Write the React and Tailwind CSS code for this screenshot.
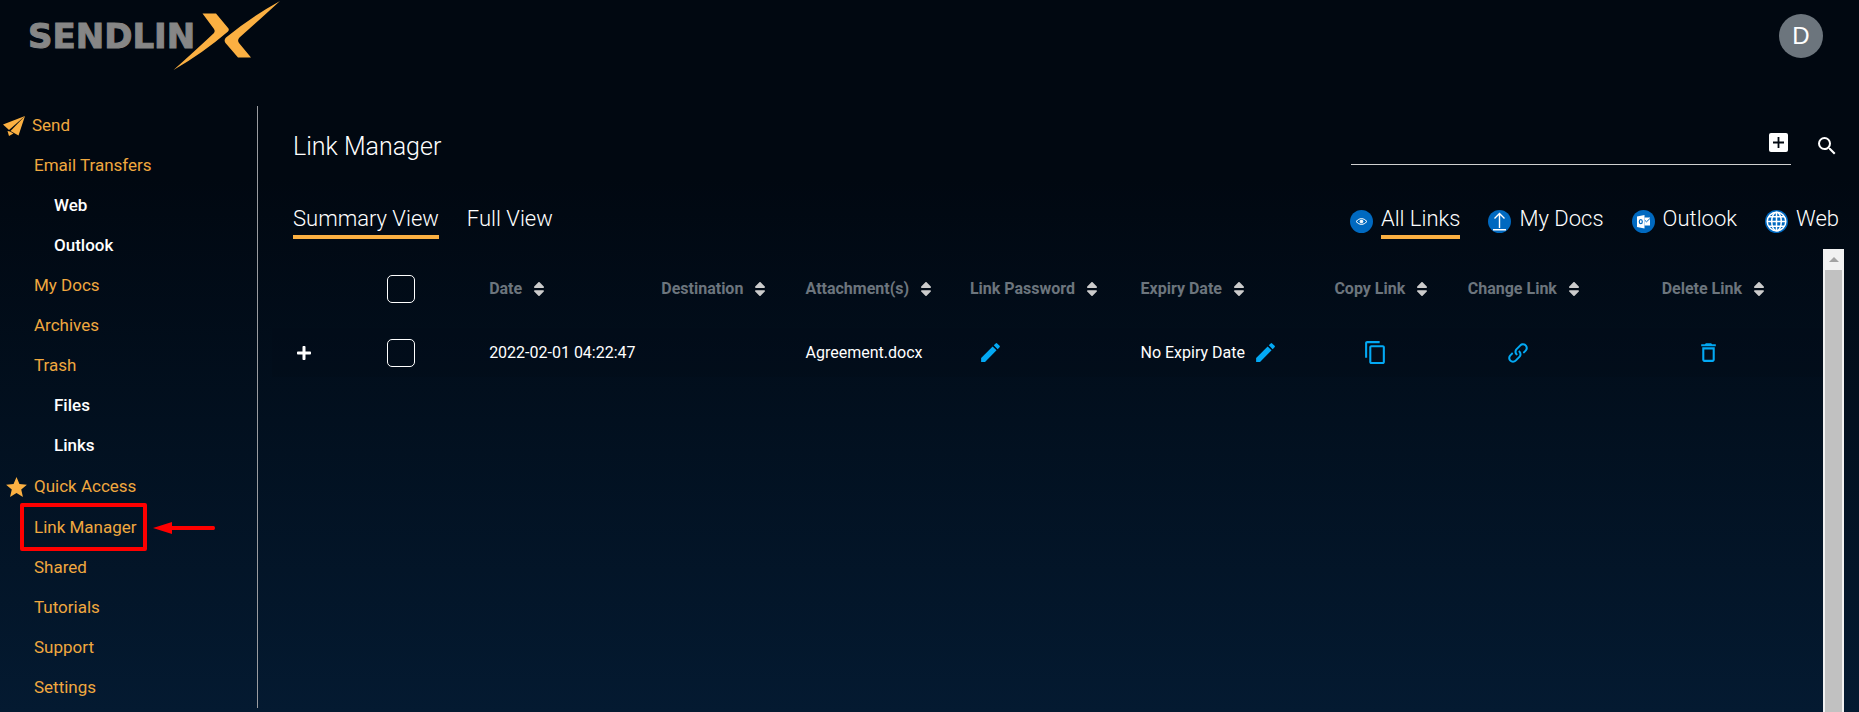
import clsx from 'clsx';
import { useState } from 'react';
import { FaPlus, FaSort } from 'react-icons/fa';
import { ImLink } from 'react-icons/im';
import { MdContentCopy, MdDeleteOutline, MdEdit, MdSearch, MdStar } from 'react-icons/md';

const sendItems = [
  { label: 'Email Transfers' },
  { label: 'Web', nested: true },
  { label: 'Outlook', nested: true },
  { label: 'My Docs' },
  { label: 'Archives' },
  { label: 'Trash' },
  { label: 'Files', nested: true },
  { label: 'Links', nested: true },
];

const quickItems = [
  { label: 'Link Manager', marked: true },
  { label: 'Shared' },
  { label: 'Tutorials' },
  { label: 'Support' },
  { label: 'Settings' },
];

const columns = [
  { label: 'Date', width: 'w-[11.1%]' },
  { label: 'Destination', width: 'w-[9.3%]' },
  { label: 'Attachment(s)', width: 'w-[10.6%]' },
  { label: 'Link Password', width: 'w-[11%]' },
  { label: 'Expiry Date', width: 'w-[12.5%]' },
  { label: 'Copy Link', width: 'w-[8.6%]' },
  { label: 'Change Link', width: 'w-[12.5%]' },
  { label: 'Delete Link', width: '' },
];

const links = [{ id: 1, date: '2022-02-01 04:22:47', destination: '', attachment: 'Agreement.docx', expiry: 'No Expiry Date' }];

const Logo = () => (
  <a href="#home" aria-label="Sendlinx" className="relative ml-7 block h-[72px] w-64">
    <span className="absolute top-[14px] left-0 font-['DejaVu_Sans'] text-[34px] leading-[44px] font-bold text-[#868686] [-webkit-text-stroke:1px_#868686]">SENDLIN</span>
    <svg viewBox="0 0 110 72" className="absolute top-0 left-[144px] h-[72px] w-[110px]" fill="#fbb042" aria-hidden="true">
      <path d="M30.5 13.5H44L56.5 28.500Q57.500 30 56 31.500Q31 53 1.500 70Q25 49 42 33Q43.500 31 42 29Z" />
      <path d="M108 1Q84 23 67.500 37.500Q65 40 67 43L79 57.500H66L53.500 43Q51.500 40 54 37.500Q79 17 108 1Z" />
    </svg>
  </a>
);

const SendIcon = () => (
  <svg viewBox="0 0 22 20" className="h-5 w-[22px]" fill="#fbb042" aria-hidden="true">
    <path d="M0 8.500 22 0 6 14Z" />
    <path d="M22 0 15.500 19.500 7.500 15Z" />
    <path d="M4.500 15 7 15.500 10.500 17.500 6 20Z" />
  </svg>
);

const NavItem = ({ label, nested, marked }) => (
  <li className={clsx('relative flex h-10 items-center', nested ? 'pl-[54px] text-white' : 'pl-[34px] text-[#f0a83f]')}>
    <a href="#nav" className={clsx(nested && 'font-medium')}>{label}</a>
    {marked && (
      <>
        <span className="absolute -top-[5px] left-5 h-12 w-[127px] rounded-xs border-4 border-[#ff0000]" />
        <svg viewBox="0 0 62 12" className="absolute top-[14px] left-[153px] h-3 w-[62px]" fill="#ff0000" aria-hidden="true">
          <path d="M0 6 19 0V4H60.500Q62 4 62 6T60.500 8H19V12Z" />
        </svg>
      </>
    )}
  </li>
);

const Sidebar = () => (
  <nav className="mb-1 w-[258px] shrink-0 border-r border-[#9a9ca0] text-[17px]">
    <a href="#send" className="flex h-10 items-center gap-[7px] pl-[3px] text-[#f0a83f]">
      <SendIcon /> Send
    </a>
    <ul>
      {sendItems.map((item) => <NavItem key={item.label} {...item} />)}
    </ul>
    <a href="#quick" className="mt-px flex h-10 items-center gap-[5px] pl-1 text-[#f0a83f]">
      <MdStar className="text-[#fbb042]" size={25} /> Quick Access
    </a>
    <ul className="mt-px">
      {quickItems.map((item) => <NavItem key={item.label} {...item} />)}
    </ul>
  </nav>
);

const EyeGlyph = () => (
  <g fill="none" stroke="#fff" strokeWidth="1">
    <path d="M6 11.500Q11.500 5.500 17 11.500Q11.500 17.500 6 11.500Z" />
    <circle cx="11.500" cy="11.500" r="1.400" fill="#fff" />
  </g>
);

const UploadGlyph = () => (
  <path d="M11.500 18V4M6.500 8.500 11.500 3.500 16.500 8.500M5 19.800H18" fill="none" stroke="#fff" strokeWidth="1.400" />
);

const OutlookGlyph = () => (
  <g>
    <path d="M12.500 7.500H18V15.500H12.500Z" fill="#fff" />
    <path d="M12.500 10 14.500 11.800 18 8.500" fill="none" stroke="#0069c0" />
    <path d="M5 6.500 12.500 5V18.500L5 17Z" fill="#fff" />
    <ellipse cx="8.800" cy="11.700" rx="1.500" ry="2" fill="none" stroke="#0069c0" strokeWidth="1.200" />
  </g>
);

const GlobeGlyph = () => (
  <g fill="none" stroke="#fff" strokeWidth="1.500">
    <circle cx="11.500" cy="11.500" r="9.300" />
    <ellipse cx="11.500" cy="11.500" rx="4.800" ry="9.300" />
    <path d="M11.500 2V21M2 11.500H21M3.500 6.800H19.500M3.500 16.200H19.500" />
  </g>
);

const filters = [
  { label: 'All Links', Glyph: EyeGlyph },
  { label: 'My Docs', Glyph: UploadGlyph },
  { label: 'Outlook', Glyph: OutlookGlyph },
  { label: 'Web', Glyph: GlobeGlyph },
];

const Tab = ({ active, onClick, children }) => (
  <button type="button" onClick={onClick} className={clsx('h-9 cursor-pointer border-b-4', active ? 'border-[#fbb042]' : 'border-transparent')}>
    {children}
  </button>
);

const Checkbox = ({ label }) => (
  <input
    type="checkbox"
    aria-label={label}
    className="block h-7 w-7 appearance-none rounded-[5px] border border-white checked:bg-[#03a9f4]"
  />
);

const IconButton = ({ label, className, children }) => (
  <button type="button" aria-label={label} className={clsx('block cursor-pointer text-[#03a9f4]', className)}>
    {children}
  </button>
);

const LinkTable = () => (
  <table className="w-full table-fixed text-left text-base">
    <thead>
      <tr className="h-[79px] text-[#6c757d]">
        <th className="w-[7.400%]" aria-label="Expand" />
        <th className="w-[6.600%]"><Checkbox label="Select all links" /></th>
        {columns.map(({ label, width }) => (
          <th key={label} className={clsx('font-bold whitespace-nowrap', width)}>
            <button type="button" className="flex cursor-pointer items-center gap-2">
              {label} <FaSort className="text-[#cccccc]" size={18} />
            </button>
          </th>
        ))}
      </tr>
    </thead>
    <tbody>
      {links.map((link) => (
        <tr key={link.id} className="h-[49px] bg-[#020c18]/40 whitespace-nowrap text-white">
          <td>
            <button type="button" aria-label="Show details" className="ml-6 block cursor-pointer">
              <FaPlus size={16} />
            </button>
          </td>
          <td><Checkbox label={`Select ${link.attachment}`} /></td>
          <td>{link.date}</td>
          <td>{link.destination}</td>
          <td>{link.attachment}</td>
          <td><IconButton label="Edit password" className="ml-2"><MdEdit size={25} /></IconButton></td>
          <td>
            <div className="flex items-center gap-2">
              {link.expiry}
              <IconButton label="Edit expiry date"><MdEdit size={25} /></IconButton>
            </div>
          </td>
          <td><IconButton label="Copy link" className="ml-[29px]"><MdContentCopy size={25} /></IconButton></td>
          <td><IconButton label="Change link" className="ml-10"><ImLink size={20} /></IconButton></td>
          <td><IconButton label="Delete link" className="ml-[34px]"><MdDeleteOutline size={25} /></IconButton></td>
        </tr>
      ))}
    </tbody>
  </table>
);

const ScrollBar = () => (
  <div className="flex w-[21px] shrink-0 flex-col bg-[#f1f1f1] px-0.5" aria-hidden="true">
    <div className="grid h-[21px] place-items-center">
      <svg viewBox="0 0 10 5" className="h-[5px] w-[10px]" fill="#a3a3a3"><path d="M0 5 5 0 10 5Z" /></svg>
    </div>
    <div className="flex-1 bg-[#c1c1c1]" />
  </div>
);

const App = () => {
  const [view, setView] = useState('Summary View');
  const [filter, setFilter] = useState('All Links');

  return (
    <div className="flex min-h-screen flex-col bg-gradient-to-b from-[#010811] from-25% to-[#041a31] font-['Roboto',sans-serif]">
      <header className="flex h-[106px] items-start justify-between">
        <Logo />
        <button type="button" aria-label="Account" className="mt-[14px] mr-9 h-11 w-11 cursor-pointer rounded-full bg-[#6c757d] font-['Liberation_Sans'] text-2xl text-white">
          D
        </button>
      </header>

      <div className="flex flex-1">
        <Sidebar />
        <main className="flex min-w-0 flex-1 flex-col pt-[17px] pr-[15px] pl-[14px] font-light text-white">
          <div className="flex items-end justify-between pr-[5px] pl-[21px]">
            <h1 className="text-[25px] leading-9">Link Manager</h1>
            <form className="flex items-center gap-[24px]" onSubmit={(event) => event.preventDefault()}>
              <div className="flex h-[42px] w-[440px] items-center border-b border-[#d0d0d0]">
                <input type="text" aria-label="Search links" className="min-w-0 flex-1 bg-transparent text-lg outline-none" />
                <button type="button" aria-label="Add search term" className="mr-[3px] mb-0.5 cursor-pointer">
                  <svg viewBox="0 0 19 19" className="h-[19px] w-[19px]" aria-hidden="true">
                    <rect width="19" height="19" rx="2" fill="#fff" />
                    <path d="M9.500 4V15M4 9.500H15" stroke="#010811" strokeWidth="1.800" />
                  </svg>
                </button>
              </div>
              <button type="submit" aria-label="Search" className="mt-1 cursor-pointer">
                <MdSearch size={24} />
              </button>
            </form>
          </div>

          <div className="mt-[38px] flex justify-between pr-[5px] pl-[21px] text-[22px] leading-8">
            <div className="flex gap-7">
              {['Summary View', 'Full View'].map((name) => (
                <Tab key={name} active={view === name} onClick={() => setView(name)}>{name}</Tab>
              ))}
            </div>
            <div className="flex gap-7">
              {filters.map(({ label, Glyph }) => (
                <div key={label} className="flex items-center gap-2">
                  <svg viewBox="0 0 23 23" className="h-[23px] w-[23px]" aria-hidden="true">
                    <circle cx="11.500" cy="11.500" r="11.500" fill="#0069c0" />
                    <Glyph />
                  </svg>
                  <Tab active={filter === label} onClick={() => setFilter(label)}>{label}</Tab>
                </div>
              ))}
            </div>
          </div>

          <div className="mt-2.5 flex flex-1 font-normal">
            <div className="min-w-0 flex-1"><LinkTable /></div>
            <ScrollBar />
          </div>
        </main>
      </div>
    </div>
  );
};

export default App;
